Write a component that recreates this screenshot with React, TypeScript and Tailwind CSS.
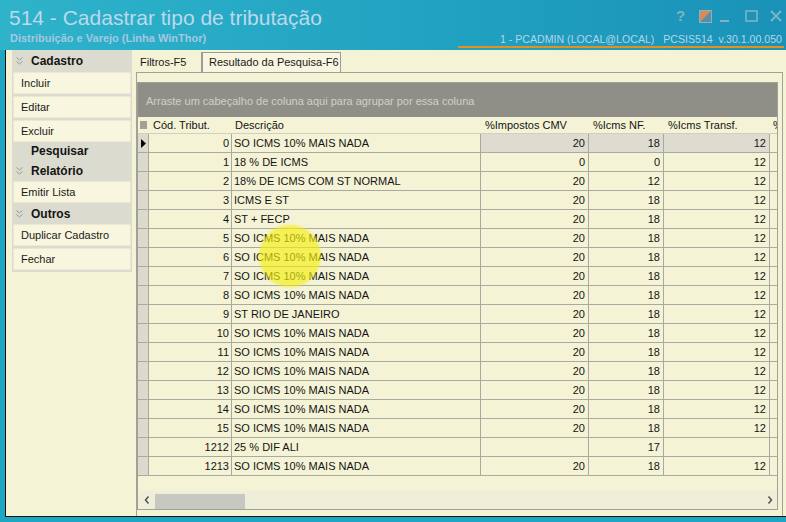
import React from 'react';

type Row = { cod: string; desc: string; imp: string; nf: string; tr: string };

const rows: Row[] = [
  { cod: '0', desc: 'SO ICMS 10% MAIS NADA', imp: '20', nf: '18', tr: '12' },
  { cod: '1', desc: '18 % DE ICMS', imp: '0', nf: '0', tr: '12' },
  { cod: '2', desc: '18% DE ICMS COM ST NORMAL', imp: '20', nf: '12', tr: '12' },
  { cod: '3', desc: 'ICMS E ST', imp: '20', nf: '18', tr: '12' },
  { cod: '4', desc: 'ST + FECP', imp: '20', nf: '18', tr: '12' },
  { cod: '5', desc: 'SO ICMS 10% MAIS NADA', imp: '20', nf: '18', tr: '12' },
  { cod: '6', desc: 'SO ICMS 10% MAIS NADA', imp: '20', nf: '18', tr: '12' },
  { cod: '7', desc: 'SO ICMS 10% MAIS NADA', imp: '20', nf: '18', tr: '12' },
  { cod: '8', desc: 'SO ICMS 10% MAIS NADA', imp: '20', nf: '18', tr: '12' },
  { cod: '9', desc: 'ST RIO DE JANEIRO', imp: '20', nf: '18', tr: '12' },
  { cod: '10', desc: 'SO ICMS 10% MAIS NADA', imp: '20', nf: '18', tr: '12' },
  { cod: '11', desc: 'SO ICMS 10% MAIS NADA', imp: '20', nf: '18', tr: '12' },
  { cod: '12', desc: 'SO ICMS 10% MAIS NADA', imp: '20', nf: '18', tr: '12' },
  { cod: '13', desc: 'SO ICMS 10% MAIS NADA', imp: '20', nf: '18', tr: '12' },
  { cod: '14', desc: 'SO ICMS 10% MAIS NADA', imp: '20', nf: '18', tr: '12' },
  { cod: '15', desc: 'SO ICMS 10% MAIS NADA', imp: '20', nf: '18', tr: '12' },
  { cod: '1212', desc: '25 % DIF ALI', imp: '', nf: '17', tr: '' },
  { cod: '1213', desc: 'SO ICMS 10% MAIS NADA', imp: '20', nf: '18', tr: '12' },
];

// chevron duplo do painel lateral
const Chevron = () => (
  <svg width="7" height="8" viewBox="0 0 7 8" className="shrink-0">
    <path d="M0.5 0.5 L3.5 3 L6.5 0.5 M0.5 4.5 L3.5 7 L6.5 4.5" fill="none" stroke="#9a9a90" strokeWidth="1" />
  </svg>
);

const SideHeader = ({ label, chevron = true, h }: { label: string; chevron?: boolean; h: string }) => (
  <div className={`${h} flex items-center pl-[4px] gap-[4px] text-[12px] font-bold text-[#141414]`}>
    {chevron ? <Chevron /> : <span className="w-[7px]" />}
    <span className="ml-[4px]">{label}</span>
  </div>
);

const SideItem = ({ label, mt = 'mt-0' }: { label: string; mt?: string }) => (
  <div className={`${mt} mx-[1px] h-[22px] flex items-center pl-[7px] bg-[#f8f6de] border border-[#ebe8cf] text-[11px] text-[#1a1a1a]`}>
    {label}
  </div>
);

export default function App() {
  return (
    <div className="relative w-[786px] h-[522px] overflow-hidden bg-[#1ea6c2] font-['Liberation_Sans',Arial,sans-serif]">
      {/* barra de titulo */}
      <div className="relative h-[50px] bg-linear-to-r from-[#2fb3ca] via-[#22a4c2] to-[#1a92b8]">
        <div className="absolute left-[9px] top-[6px] text-[21px] leading-[24px] text-[#bcd9ec]">
          514 - Cadastrar tipo de tributação
        </div>
        <div className="absolute left-[10px] top-[32px] text-[11px] leading-[13px] font-bold text-[#a4c8e2]">
          Distribuição e Varejo (Linha WinThor)
        </div>
        <div className="absolute right-[4px] top-[33px] text-[10.6px] leading-[13px] text-[#b4d4e6] whitespace-pre">
          1 - PCADMIN (LOCAL@LOCAL)   PCSIS514  v.30.1.00.050
        </div>
        <div className="absolute left-[458px] right-[2px] top-[46px] h-[2px] bg-[#e8901e]" />
        {/* botoes da janela */}
        <div className="absolute top-[8px] left-[676px] flex items-center">
          <span className="text-[15px] leading-[16px] text-[#7db4c6] font-bold">?</span>
          <svg width="13" height="13" viewBox="0 0 13 13" className="ml-[14px]">
            <rect x="0.5" y="0.5" width="12" height="12" fill="#5d8ea0" stroke="#86b2c2" />
            <path d="M1 1 H12 L1 12 Z" fill="#d98a5a" />
          </svg>
          <svg width="10" height="14" viewBox="0 0 10 14" className="ml-[8px]">
            <rect x="0" y="11" width="9" height="2" fill="#7db4c6" />
          </svg>
          <svg width="13" height="13" viewBox="0 0 13 13" className="ml-[15px]">
            <rect x="1" y="1" width="11" height="10" fill="none" stroke="#7db4c6" strokeWidth="1.6" />
          </svg>
          <svg width="12" height="12" viewBox="0 0 12 12" className="ml-[12px]">
            <path d="M1 1 L11 11 M11 1 L1 11" stroke="#7db4c6" strokeWidth="1.8" />
          </svg>
        </div>
      </div>

      {/* corpo */}
      <div className="ml-[5px] h-[467px] flex bg-[#f5f3d6] border-l border-b border-[#101010]">
        {/* painel lateral */}
        <div className="w-[130px] shrink-0 pl-[6px] pr-[4px]">
          <div className="bg-[#dcdbcf] pb-[2px]">
            <SideHeader label="Cadastro" h="h-[22px]" />
            <SideItem label="Incluir" />
            <SideItem label="Editar" mt="mt-[2px]" />
            <SideItem label="Excluir" mt="mt-[2px]" />
            <SideHeader label="Pesquisar" chevron={false} h="h-[18px]" />
            <SideHeader label="Relatório" h="h-[21px]" />
            <SideItem label="Emitir Lista" />
            <SideHeader label="Outros" h="h-[21px]" />
            <SideItem label="Duplicar Cadastro" />
            <SideItem label="Fechar" mt="mt-[2px]" />
          </div>
        </div>

        {/* abas */}
        <div className="w-[647px] shrink-0 flex flex-col">
          <div className="h-[22px] flex items-end text-[11px] text-[#1a1a1a]">
            <div className="h-[20px] flex items-center pl-[4px] w-[64px]">Filtros-F5</div>
            <div className="h-[20px] ml-[1px] w-[140px] flex items-center pl-[6px] border-l-2 border-t border-r border-[#9c9c94] bg-[#f8f6e0]">
              Resultado da Pesquisa-F6
            </div>
          </div>
          <div className="flex-1 border-t border-l border-r border-[#a2a29a] pt-[9px] pr-[4px]">
            {/* grade */}
            <div className="w-[641px] h-[428px] border border-[#a0a098] flex flex-col text-[11px] text-[#141414]">
              <div className="h-[34px] shrink-0 bg-[#8f8f88] flex items-end pl-[8px] pb-[8px] text-[11px] text-[#cfcfc8]">
                Arraste um cabeçalho de coluna aqui para agrupar por essa coluna
              </div>
              <div className="h-[17px] shrink-0 flex border-b border-[#d0cfc0]">
                <div className="w-[11px] flex items-center justify-center">
                  <svg width="7" height="8" viewBox="0 0 7 8">
                    <path d="M0 1 H7 M0 3 H7 M0 5 H7 M0 7 H7" stroke="#505050" strokeWidth="1" />
                  </svg>
                </div>
                <div className="w-[83px] pl-[4px] flex items-center">Cód. Tribut.</div>
                <div className="w-[249px] pl-[3px] flex items-center">Descrição</div>
                <div className="w-[108px] pl-[4px] flex items-center">%Impostos CMV</div>
                <div className="w-[75px] pl-[4px] flex items-center">%Icms NF.</div>
                <div className="w-[106px] pl-[4px] flex items-center">%Icms Transf.</div>
                <div className="w-[7px] pl-[3px] flex items-center overflow-hidden">%</div>
              </div>
              {rows.map((r, i) => {
                const sel = i === 0;
                const num = sel ? 'bg-[#dedcd0]' : '';
                return (
                  <div key={r.cod} className="h-[19px] shrink-0 flex border-b border-[#aaa9a0]">
                    <div className="w-[11px] bg-[#dbdacd] border-r border-[#aaa9a0] flex items-center justify-center">
                      {sel && (
                        <svg width="5" height="9" viewBox="0 0 5 9">
                          <path d="M0 0 L5 4.5 L0 9 Z" fill="#000" />
                        </svg>
                      )}
                    </div>
                    <div className="w-[83px] border-r border-[#aaa9a0] flex items-center justify-end pr-[2px]">{r.cod}</div>
                    <div className="w-[249px] border-r border-[#aaa9a0] flex items-center pl-[2px] whitespace-pre">{r.desc}</div>
                    <div className={`w-[108px] border-r border-[#aaa9a0] flex items-center justify-end pr-[3px] ${num}`}>{r.imp}</div>
                    <div className={`w-[75px] border-r border-[#aaa9a0] flex items-center justify-end pr-[3px] ${num}`}>{r.nf}</div>
                    <div className={`w-[106px] border-r border-[#aaa9a0] flex items-center justify-end pr-[3px] ${num}`}>{r.tr}</div>
                    <div className="w-[7px]" />
                  </div>
                );
              })}
              <div className="flex-1" />
              {/* barra de rolagem horizontal */}
              <div className="h-[18px] shrink-0 flex items-center bg-[#efeed8]">
                <svg width="6" height="8" viewBox="0 0 6 8" className="ml-[6px]">
                  <path d="M4.5 0.5 L1.5 4 L4.5 7.5" fill="none" stroke="#505050" strokeWidth="1.5" />
                </svg>
                <div className="ml-[5px] w-[90px] h-[15px] self-end bg-[#c8c8c2]" />
                <div className="flex-1" />
                <svg width="6" height="8" viewBox="0 0 6 8" className="mr-[4px]">
                  <path d="M1.5 0.5 L4.5 4 L1.5 7.5" fill="none" stroke="#505050" strokeWidth="1.5" />
                </svg>
              </div>
            </div>
          </div>
        </div>
      </div>

      {/* destaque do cursor */}
      <div className="absolute left-[259px] top-[225px] w-[62px] h-[62px] rounded-full bg-[#f2ee10]/65 blur-[1px] pointer-events-none" />
    </div>
  );
}
